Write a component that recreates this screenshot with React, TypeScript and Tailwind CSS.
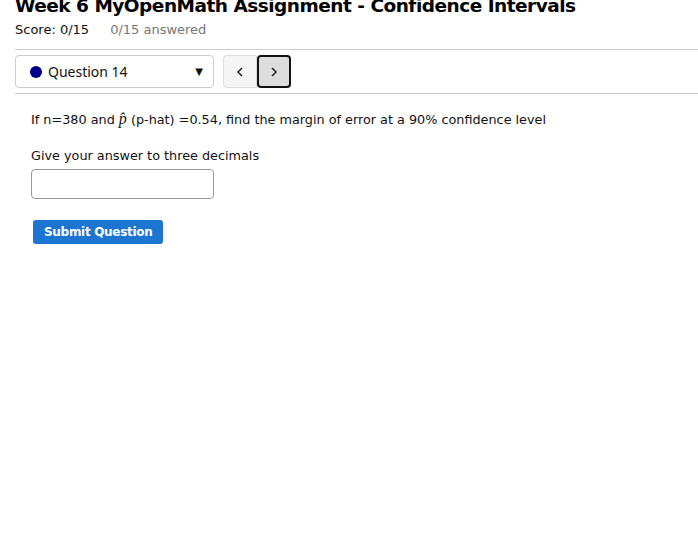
import React from 'react';

const font = { fontFamily: '"DejaVu Sans", Tahoma, sans-serif' };

export default function App() {
    return (
        <div className="min-h-[547px] bg-white text-[#111]" style={font}>
            <div className="pl-[15px]">
                <h1 className="-mt-[7px] text-[18.5px] leading-[26px] font-bold tracking-[-0.5px] text-black whitespace-nowrap">
                    Week 6 MyOpenMath Assignment - Confidence Intervals
                </h1>
                <div className="mt-[2px] flex text-[13px] leading-[18px]">
                    <span>Score: 0/15</span>
                    <span className="ml-[21px] text-[#777]">0/15 answered</span>
                </div>
                <div className="mt-[10px] border-t border-[#ccc]" />
                <div className="flex items-center pt-[5px] pb-[5px]">
                    <div className="flex h-[33px] w-[199px] items-center rounded-[4px] border border-[#ccc] bg-white pl-[14px] pr-[10px]">
                        <span className="h-[12px] w-[12px] rounded-full bg-[#00008b]" />
                        <span className="ml-[6px] text-[14px]" style={{ fontFamily: '"Noto Sans", sans-serif' }}>
                            Question 14
                        </span>
                        <span className="ml-auto text-[10px]">▼</span>
                    </div>
                    <div className="ml-[9px] flex">
                        <button className="flex h-[33px] w-[34px] items-center justify-center rounded-l-[4px] border border-[#ddd] bg-[#f5f5f5]">
                            <svg width="10" height="12" viewBox="0 0 10 12" fill="none" stroke="#222" strokeWidth="1.5">
                                <path d="M7 2 L3 6 L7 10" />
                            </svg>
                        </button>
                        <button className="flex h-[33px] w-[34px] items-center justify-center rounded-[4px] border-2 border-[#111] bg-[#ddd]">
                            <svg width="10" height="12" viewBox="0 0 10 12" fill="none" stroke="#222" strokeWidth="1.5">
                                <path d="M3 2 L7 6 L3 10" />
                            </svg>
                        </button>
                    </div>
                </div>
                <div className="border-t border-[#ccc]" />
                <div className="pl-[16px] text-[12.8px] leading-[18px]">
                    <p className="mt-[16px]">
                        If n=380 and{' '}
                        <span className="italic text-[16px]" style={{ fontFamily: '"Liberation Serif", serif' }}>
                            p̂
                        </span>{' '}
                        (p-hat) =0.54, find the margin of error at a 90% confidence level
                    </p>
                    <p className="mt-[18px]">Give your answer to three decimals</p>
                    <input
                        type="text"
                        className="mt-[4px] block h-[30px] w-[183px] rounded-[4px] border border-[#999] bg-white"
                    />
                    <button className="ml-[2px] mt-[21px] block h-[24px] rounded-[3px] bg-[#1d75d2] px-[11px] text-[12px] font-bold tracking-[-0.3px] text-white">
                        Submit Question
                    </button>
                </div>
            </div>
        </div>
    );
}
